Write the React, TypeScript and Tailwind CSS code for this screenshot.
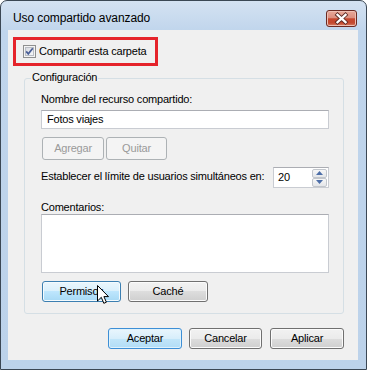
import type { ReactNode } from 'react';

type Variant = 'normal' | 'hover' | 'default' | 'disabled';

const btnStyles: Record<Variant, string> = {
  normal:
    'border-[#707070] text-black shadow-[inset_0_0_0_1px_#fbfbfb] bg-[linear-gradient(#f2f2f2_0%,#ebebeb_50%,#dddddd_50%,#cfcfcf_100%)]',
  hover:
    'border-[#3c7fb1] text-black shadow-[inset_0_0_0_1px_#f4fbfe] bg-[linear-gradient(#eaf6fd_0%,#d9f0fc_50%,#bee6fd_50%,#a7d9f5_100%)]',
  default:
    'border-[#3d8fd6] text-black shadow-[inset_0_0_0_1px_#dff2fc] bg-[linear-gradient(#e9f6fd_0%,#d7eefb_50%,#c2e6f9_50%,#b2ddf6_100%)]',
  disabled: 'border-[#adb2b5] text-[#9a9a9a] bg-[#f4f4f4]',
};

function Btn({ children, w, variant = 'normal' }: { children: ReactNode; w: string; variant?: Variant }) {
  return (
    <div className={`flex h-full items-center justify-center rounded-[3px] border ${w} ${btnStyles[variant]}`}>
      {children}
    </div>
  );
}

function CheckBox() {
  return (
    <svg width="13" height="13" viewBox="0 0 13 13" aria-hidden>
      <defs>
        <linearGradient id="cb" x1="0" y1="0" x2="1" y2="1">
          <stop offset="0" stopColor="#d6d9df" />
          <stop offset="1" stopColor="#f7f8fa" />
        </linearGradient>
      </defs>
      <rect x="0.5" y="0.5" width="12" height="12" fill="#f4f4f4" stroke="#8e8f8f" />
      <rect x="2.5" y="2.5" width="8" height="8" fill="url(#cb)" stroke="#b9bdc4" />
      <path d="M3.2 6.4 L5.3 8.9 L9.8 3.3" fill="none" stroke="#4a5f97" strokeWidth="1.7" />
    </svg>
  );
}

function CloseButton() {
  return (
    <div className="relative h-[17px] w-[31px] rounded-[3px] border border-[#6b2a22] bg-[linear-gradient(#e8a899_0%,#dc8f7f_45%,#c5472e_52%,#c4492f_80%,#d7836b_100%)] shadow-[inset_0_0_0_1px_#eebfb3]">
      <svg width="29" height="15" viewBox="0 0 29 15" className="absolute left-0 top-0" aria-hidden>
        <path d="M10.5 3.8 L18.5 11.2 M18.5 3.8 L10.5 11.2" stroke="#5a2a24" strokeWidth="4" strokeLinecap="square" />
        <path d="M10.5 3.8 L18.5 11.2 M18.5 3.8 L10.5 11.2" stroke="#ffffff" strokeWidth="2.3" strokeLinecap="square" />
      </svg>
    </div>
  );
}

function Cursor() {
  return (
    <svg width="13" height="20" viewBox="0 0 13 20" className="absolute left-[55px] top-[4px]" aria-hidden>
      <path d="M0.5 0.5 L0.5 16 L4.3 12.3 L6.8 18.3 L9.4 17.2 L6.9 11.6 L11.5 11.6 Z" fill="#ffffff" stroke="#000000" strokeLinejoin="miter" />
    </svg>
  );
}

function SpinArrow({ up }: { up?: boolean }) {
  return (
    <div className="flex h-[9px] w-[15px] items-center justify-center rounded-[2px] border border-[#c2c6cc] bg-[linear-gradient(#f7f7f7,#e4e6e9)]">
      <svg width="7" height="4" viewBox="0 0 7 4" aria-hidden>
        <path d={up ? 'M0 4 L3.5 0 L7 4 Z' : 'M0 0 L3.5 4 L7 0 Z'} fill="#4d6ea8" />
      </svg>
    </div>
  );
}

const field = 'border border-[#c9ccd2] border-t-[#abadb3] bg-white';

export default function App() {
  return (
    <div className="h-[370px] w-[367px] bg-white font-['Liberation_Sans',Arial,sans-serif] text-[11px] leading-[13px] tracking-[-0.2px] text-black">
      <div className="flex h-[370px] w-[367px] flex-col rounded-t-[7px] border border-[#3b4754] bg-[linear-gradient(#d4e2f2,#c0d5ec_30px,#bcd2ea)] pb-[9px] pl-[7px] pr-[8px]">
        {/* Barra de título */}
        <div className="flex h-[29px] items-start justify-between">
          <span className="ml-[5px] mt-[9px] text-[12px] leading-[16px] tracking-[-0.1px]">
            Uso compartido avanzado
          </span>
          <div className="mr-[1px] mt-[9px]">
            <CloseButton />
          </div>
        </div>

        {/* Área cliente */}
        <div className="flex flex-1 flex-col bg-[#f0f0f0]">
          <div className="ml-[5px] mt-[7px] flex h-[29px] w-[145px] items-center gap-[3px] border-[3px] border-[#e5232b] pl-[7px]">
            <CheckBox />
            <span className="whitespace-nowrap">Compartir esta carpeta</span>
          </div>

          <div className="relative ml-[16px] mt-[12px] w-[320px] rounded-[3px] border border-[#d5dfe5] pb-[11px] pl-[16px] pt-[14px]">
            <span className="absolute left-[6px] top-[-8px] bg-[#f0f0f0] px-[1px]">Configuración</span>

            <div>Nombre del recurso compartido:</div>
            <div className={`mt-[4px] flex h-[19px] w-[288px] items-center pl-[5px] ${field}`}>Fotos viajes</div>

            <div className="ml-[1px] mt-[8px] flex h-[23px] gap-[2px]">
              <Btn w="w-[62px]" variant="disabled">Agregar</Btn>
              <Btn w="w-[61px]" variant="disabled">Quitar</Btn>
            </div>

            <div className="mt-[7px] flex h-[21px] w-[288px] items-center justify-between">
              <span className="mb-[3px] whitespace-nowrap">Establecer el límite de usuarios simultáneos en:</span>
              <div className={`flex h-[21px] w-[56px] items-center justify-between pl-[4px] pr-[1px] ${field}`}>
                <span>20</span>
                <div className="flex flex-col">
                  <SpinArrow up />
                  <SpinArrow />
                </div>
              </div>
            </div>

            <div className="mt-[13px]">Comentarios:</div>
            <div className={`h-[59px] w-[288px] ${field}`} />

            <div className="ml-[1px] mt-[8px] flex h-[21px] gap-[7px]">
              <div className="relative">
                <Btn w="w-[79px]" variant="hover">Permisos</Btn>
                <Cursor />
              </div>
              <Btn w="w-[80px]">Caché</Btn>
            </div>
          </div>

          <div className="mt-[14px] flex h-[21px] justify-end pr-[14px]">
            <div className="flex h-full gap-[7px]">
              <Btn w="w-[74px]" variant="default">Aceptar</Btn>
              <Btn w="w-[73px]">Cancelar</Btn>
            </div>
            <div className="ml-[8px] h-full">
              <Btn w="w-[74px]">Aplicar</Btn>
            </div>
          </div>
        </div>
      </div>
    </div>
  );
}
